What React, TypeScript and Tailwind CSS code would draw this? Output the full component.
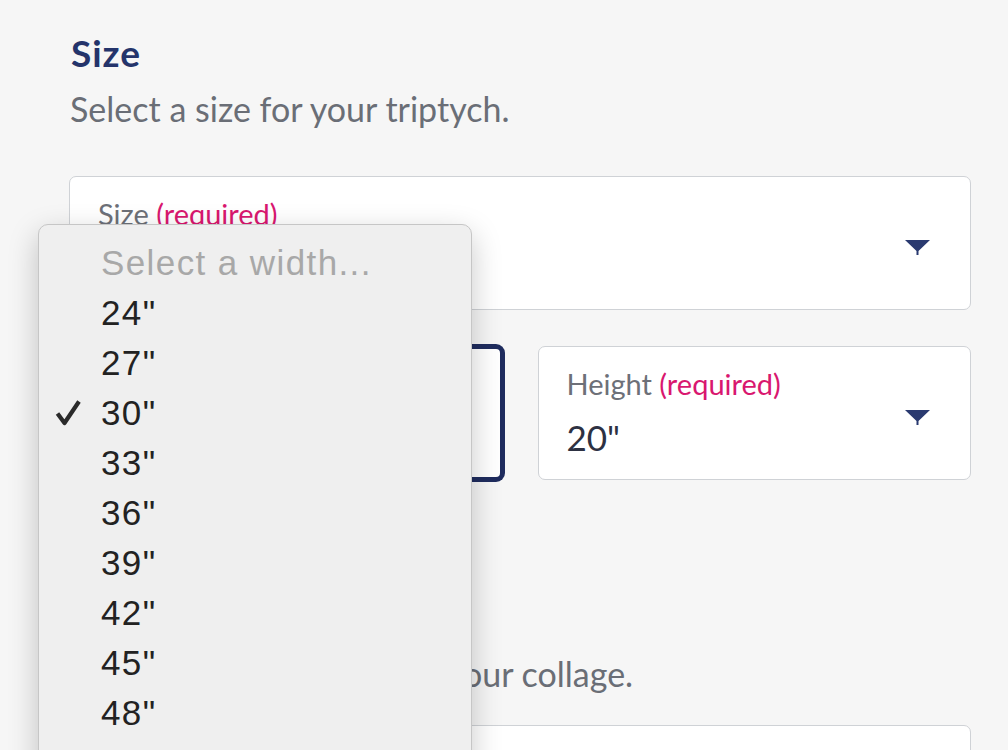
import React from 'react'

const navy = 'text-[#24346b]'

function Arrow() {
  return (
    <svg width="25" height="15" viewBox="0 0 25 15" className="shrink-0">
      <path d="M0 0 H25 L13.5 11 V15 H11.5 V11 Z" fill="#2a3a70" />
    </svg>
  )
}

function SelectBox({
  label,
  value,
  focused,
}: {
  label?: string
  value?: string
  focused?: boolean
}) {
  return (
    <div
      className={
        focused
          ? 'h-[134px] bg-white rounded-[7px] border-[3px] border-[#1f2c5e] ring-2 ring-[#1f2c5e] flex items-center pl-[26px] pr-[38px]'
          : 'h-[134px] bg-white rounded-[7px] border border-[#cfd2d6] flex items-center pl-[28px] pr-[40px]'
      }
    >
      <div className="flex-1 flex flex-col self-stretch pt-[22px]">
        {label && (
          <p className="text-[29px] leading-[29px] text-[#6d7078]">
            {label} <span className="text-[#d9176f]">(required)</span>
          </p>
        )}
        {value && (
          <p className="mt-[22px] text-[35px] leading-[35px] text-[#2d3142]">{value}</p>
        )}
      </div>
      <div className="pt-[9px]">
        <Arrow />
      </div>
    </div>
  )
}

const widths = ['24"', '27"', '30"', '33"', '36"', '39"', '42"', '45"', '48"']

function Dropdown() {
  return (
    <div className="absolute left-[38px] top-[224px] w-[434px] h-[600px] bg-[#efefef] border border-[#c6c6c6] rounded-[10px] shadow-[0_10px_30px_rgba(0,0,0,0.22)] pt-[13px] font-['Liberation_Sans',Arial,sans-serif] text-[35px] leading-[50px] tracking-[1.4px]">
      <div className="pl-[62px] text-[#a8a8a8]">Select a width...</div>
      {widths.map((w) => (
        <div key={w} className="relative pl-[62px] text-[#222222]">
          {w === '30"' && (
            <svg
              width="28"
              height="28"
              viewBox="0 0 28 28"
              className="absolute left-[15px] top-[11px]"
            >
              <path
                d="M3.5 14.5 L10.5 24 L25 2.5"
                fill="none"
                stroke="#2a2a2a"
                strokeWidth="4.2"
                strokeLinejoin="round"
              />
            </svg>
          )}
          {w}
        </div>
      ))}
    </div>
  )
}

export default function App() {
  return (
    <div className="relative w-[1008px] h-[750px] overflow-hidden bg-[#f6f6f6] font-['Lato','Open_Sans',sans-serif]">
      <div className="pl-[69px] pr-[37px] pt-[34px] flex flex-col">
        <h2 className={`text-[37px] leading-[37px] font-bold tracking-[1px] pl-[2px] ${navy}`}>
          Size
        </h2>
        <p className="mt-[21px] text-[34px] leading-[34px] text-[#6a6e76] pl-[1px]">
          Select a size for your triptych.
        </p>

        <div className="mt-[50px]">
          <SelectBox label="Size" />
        </div>

        <div className="mt-[36px] grid grid-cols-2 gap-[35px]">
          <SelectBox focused />
          <SelectBox label="Height" value='20"' />
        </div>

        <div className="mt-[117px] h-[37px]" />
        <p className="mt-[23px] text-[34px] leading-[34px] text-[#6a6e76] pl-[1px]">
          Select a frame design for your collage.
        </p>

        <div className="mt-[34px] h-[134px] bg-white rounded-[7px] border border-[#cfd2d6]" />
      </div>

      <Dropdown />
    </div>
  )
}
